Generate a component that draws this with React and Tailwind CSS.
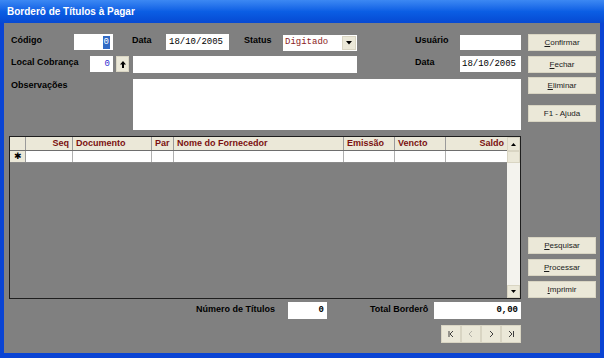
import React from 'react';

const sans = "font-['Liberation_Sans',Arial,sans-serif]";
const mono = "font-['Liberation_Mono','Courier_New',monospace]";

const labelCls = 'text-[9px] font-bold leading-[12px] text-black whitespace-nowrap';
const btnCls = 'h-[17px] w-[68px] bg-[#ebe8d8] border border-[#d9d5c3] flex items-center justify-center text-[8px] text-[#1a1a1a] leading-none';

const Btn = ({ k, rest, className = '' }) => (
    <div className={`${btnCls} ${className}`}>
        <span><span className="underline">{k}</span>{rest}</span>
    </div>
);

const NavBtn = ({ children }) => (
    <div className="w-[20px] h-[18px] bg-[#ebe8d8] border border-[#d9d5c3] flex items-center justify-center">
        <svg width="10" height="10" viewBox="0 0 10 10" fill="none" strokeWidth="1">{children}</svg>
    </div>
);

const App = () => {
    return (
        <div className={`w-[604px] h-[358px] flex flex-col bg-[#0a44d4] ${sans}`}>
            <div className="h-[23px] shrink-0 bg-linear-to-b from-[#3c88f3] via-[#0b5ee4] to-[#0749d3] flex items-center pl-[7px]">
                <span className="text-white font-bold text-[10px] leading-none">Borderô de Títulos à Pagar</span>
            </div>

            <div className="flex-1 mx-[4px] mb-[5px] bg-[#808080] flex">
                {/* left side: form, grid, totals */}
                <div className="ml-[5px] w-[512px] flex flex-col pt-[11px]">
                    <div className="flex items-start h-[16px]">
                        <div className={`${labelCls} ml-[2px] w-[63px]`}>Código</div>
                        <div className={`w-[39px] h-[16px] bg-white flex items-center justify-end pr-[3px] ${mono} text-[9px]`}>
                            <span className="bg-[#316ac5] text-white px-[1px] leading-[13px]">0</span>
                        </div>
                        <div className={`${labelCls} ml-[19px] w-[34px]`}>Data</div>
                        <div className={`w-[63px] h-[16px] bg-white pl-[3px] ${mono} text-[9px] leading-[16px] text-black`}>18/10/2005</div>
                        <div className={`${labelCls} ml-[15px] w-[39px]`}>Status</div>
                        <div className="w-[74px] h-[16px] mt-[1px] bg-white flex items-center justify-between pl-[2px] pr-[1px]">
                            <span className={`${mono} text-[9px] text-[#8a1c1c]`}>Digitado</span>
                            <div className="w-[14px] h-[14px] bg-[#ebe8d8] border border-[#d9d5c3] flex items-center justify-center">
                                <svg width="6" height="4" viewBox="0 0 6 4"><path d="M0 0h6L3 3.5z" fill="#000" /></svg>
                            </div>
                        </div>
                        <div className={`${labelCls} ml-[58px] w-[45px]`}>Usuário</div>
                        <div className="w-[61px] h-[15px] mt-[1px] bg-white"></div>
                    </div>

                    <div className="flex items-start h-[16px] mt-[6px]">
                        <div className={`${labelCls} ml-[2px] w-[79px]`}>Local Cobrança</div>
                        <div className={`w-[23px] h-[16px] bg-white pr-[3px] text-right ${mono} text-[9px] leading-[16px] text-[#2a2ad0]`}>0</div>
                        <div className="ml-[3px] w-[13px] h-[16px] bg-[#ebe8d8] border border-[#d9d5c3] flex items-center justify-center">
                            <svg width="6" height="7" viewBox="0 0 6 7"><path d="M3 0L6 3.5H4V7H2V3.5H0z" fill="#000" /></svg>
                        </div>
                        <div className="ml-[4px] w-[224px] h-[17px] bg-white"></div>
                        <div className={`${labelCls} ml-[58px] w-[45px]`}>Data</div>
                        <div className={`w-[61px] h-[16px] bg-white pl-[2px] ${mono} text-[9px] leading-[16px] text-black`}>18/10/2005</div>
                    </div>

                    <div className="flex items-start mt-[7px]">
                        <div className={`${labelCls} ml-[2px] w-[122px]`}>Observações</div>
                        <div className="w-[388px] h-[51px] bg-white"></div>
                    </div>

                    {/* grid */}
                    <div className="mt-[6px] w-[512px] h-[163px] border border-[#1e1e1e] flex">
                        <div className="flex-1 flex flex-col">
                            <div className="h-[14px] flex bg-[#ebe8d8] border-b border-[#6e6e6e] text-[9px] font-bold text-[#7a1010] leading-[13px]">
                                <div className="w-[16px] border-r border-[#9a9a9a]"></div>
                                <div className="w-[47px] border-r border-[#9a9a9a] text-right pr-[3px]">Seq</div>
                                <div className="w-[79px] border-r border-[#9a9a9a] pl-[3px]">Documento</div>
                                <div className="w-[22px] border-r border-[#9a9a9a] pl-[3px]">Par</div>
                                <div className="w-[170px] border-r border-[#9a9a9a] pl-[3px]">Nome do Fornecedor</div>
                                <div className="w-[51px] border-r border-[#9a9a9a] pl-[3px]">Emissão</div>
                                <div className="w-[51px] border-r border-[#9a9a9a] pl-[3px]">Vencto</div>
                                <div className="flex-1 text-right pr-[3px]">Saldo</div>
                            </div>
                            <div className="h-[12px] flex bg-white border-b border-[#8a8a8a]">
                                <div className="w-[16px] border-r border-[#9a9a9a] bg-[#ebe8d8] flex items-center justify-center text-[9px] leading-none text-black">✱</div>
                                <div className="w-[47px] border-r border-[#b0b0b0]"></div>
                                <div className="w-[79px] border-r border-[#b0b0b0]"></div>
                                <div className="w-[22px] border-r border-[#b0b0b0]"></div>
                                <div className="w-[170px] border-r border-[#b0b0b0]"></div>
                                <div className="w-[51px] border-r border-[#b0b0b0]"></div>
                                <div className="w-[51px] border-r border-[#b0b0b0]"></div>
                                <div className="flex-1"></div>
                            </div>
                            <div className="flex-1"></div>
                        </div>
                        <div className="w-[13px] flex flex-col bg-[#f4f3ee]">
                            <div className="h-[14px] bg-[#ebe8d8] border border-[#d9d5c3] flex items-center justify-center">
                                <svg width="5" height="3" viewBox="0 0 5 3"><path d="M0 3h5L2.5 0z" fill="#000" /></svg>
                            </div>
                            <div className="h-[12px] bg-[#ebe8d8] border border-[#d9d5c3]"></div>
                            <div className="flex-1"></div>
                            <div className="h-[13px] bg-[#ebe8d8] border border-[#d9d5c3] flex items-center justify-center">
                                <svg width="5" height="3" viewBox="0 0 5 3"><path d="M0 0h5L2.5 3z" fill="#000" /></svg>
                            </div>
                        </div>
                    </div>

                    <div className="flex items-start h-[17px] mt-[3px]">
                        <div className={`${labelCls} ml-[187px] w-[92px] pt-[1px]`}>Número de Títulos</div>
                        <div className={`w-[39px] h-[17px] bg-white pr-[3px] text-right ${mono} font-bold text-[9px] leading-[17px] text-black`}>0</div>
                        <div className={`${labelCls} ml-[43px] w-[64px] pt-[1px]`}>Total Borderô</div>
                        <div className={`w-[87px] h-[17px] bg-white pr-[3px] text-right ${mono} font-bold text-[9px] leading-[17px] text-black`}>0,00</div>
                    </div>

                    <div className="flex justify-end mt-[6px]">
                        <NavBtn>
                            <path d="M3 2v6M7 2L4 5l3 3" stroke="#404040" />
                        </NavBtn>
                        <NavBtn>
                            <path d="M6 2L3 5l3 3" stroke="#b4b2a8" />
                        </NavBtn>
                        <NavBtn>
                            <path d="M4 2l3 3-3 3" stroke="#404040" />
                        </NavBtn>
                        <NavBtn>
                            <path d="M3 2l3 3-3 3M7.5 2v6" stroke="#404040" />
                        </NavBtn>
                    </div>
                </div>

                {/* right side buttons */}
                <div className="ml-[7px] w-[68px] flex flex-col pt-[11px]">
                    <Btn k="C" rest="onfirmar" />
                    <Btn k="F" rest="echar" className="mt-[5px]" />
                    <Btn k="E" rest="liminar" className="mt-[4px]" />
                    <Btn k="" rest="F1 - Ajuda" className="mt-[11px]" />
                    <Btn k="P" rest="esquisar" className="mt-[115px]" />
                    <Btn k="P" rest="rocessar" className="mt-[5px]" />
                    <Btn k="I" rest="mprimir" className="mt-[5px]" />
                </div>
            </div>
        </div>
    );
};

export default App;
